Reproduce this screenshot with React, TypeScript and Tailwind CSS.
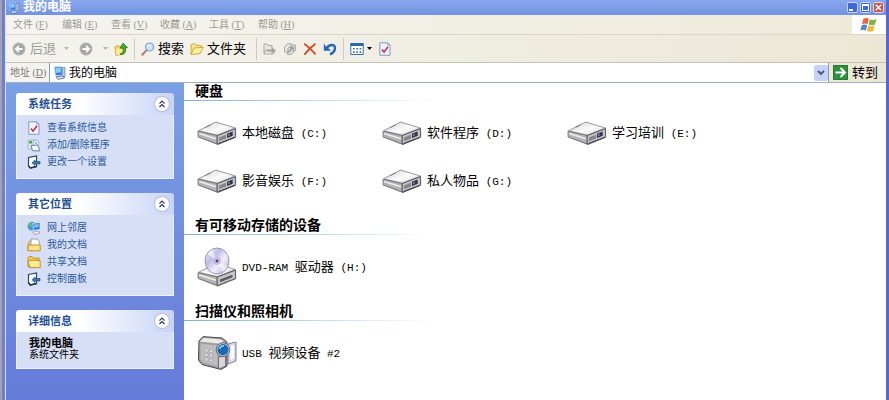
import React from 'react';

interface IconProps {
  className?: string;
}

const ComputerIcon: React.FC<IconProps> = ({ className = '' }) => (
  <svg viewBox="0 0 14 14" className={className} aria-hidden="true">
    <path d="M1.500.8h7.500v8.700h-6.500Z" fill="#2f7fe0" stroke="#b9d3f6" strokeWidth=".8" />
    <path d="M2.500 1.800h5.300v4.400l-4.800.8Z" fill="#8fcaf9" />
    <path d="M9.500 1.500H12v9H9.500Z" fill="#c9d3e6" stroke="#5f7197" strokeWidth=".7" />
    <path d="M3 10.800 10 10l1.500 2-6.500 1.400Z" fill="#dfe7f4" stroke="#4367a8" strokeWidth=".8" />
  </svg>
);

const ArrowDisc: React.FC<{ flip?: boolean }> = ({ flip = false }) => (
  <svg viewBox="0 0 14 14" className="size-3.5" aria-hidden="true">
    <circle cx="7" cy="7" r="6.4" fill="#a3a3a1" />
    <circle cx="7" cy="7" r="5.6" fill="none" stroke="#bcbcba" strokeWidth=".8" />
    <path
      d={flip ? 'M3.5 7h6M7 3.8 10.2 7 7 10.2' : 'M10.5 7h-6M7 3.8 3.8 7 7 10.2'}
      fill="none"
      stroke="#fff"
      strokeWidth="1.8"
    />
  </svg>
);

const Caret: React.FC<IconProps> = ({ className = '' }) => (
  <svg viewBox="0 0 5 3" className={`h-[3px] w-[5px] ${className}`} aria-hidden="true">
    <path d="M0 0h5L2.5 3Z" fill="currentColor" />
  </svg>
);

const UpFolderIcon = () => (
  <svg viewBox="0 0 14 14" className="size-3.5" aria-hidden="true">
    <path d="M1 5 4 3.5l1.5 1L11 4v7.5L2 13.5Z" fill="#f4d35c" stroke="#c79a25" strokeWidth=".8" />
    <path d="M1.8 7 8 5.8v6.3L2.2 13Z" fill="#fbe993" />
    <path d="M6.5 11.5c3-.6 3-3 2.8-5.2H6.2L9 1l4.600 4.600h-2c.5 4-1 6.600-5.100 7.200Z" fill="#3cae35" stroke="#1d7420" strokeWidth=".7" />
  </svg>
);

const SearchIcon = () => (
  <svg viewBox="0 0 14 14" className="size-3.5" aria-hidden="true">
    <path d="M5.4 8.4 1.3 12.8" stroke="#b67b54" strokeWidth="2" strokeLinecap="round" />
    <circle cx="8.6" cy="5" r="4" fill="#cfe6fa" stroke="#7b9cc9" strokeWidth="1.2" />
    <path d="M6.3 5a2.4 2.4 0 0 1 2.2-2.3" fill="none" stroke="#fff" strokeWidth="1.1" />
  </svg>
);

const FolderIcon = () => (
  <svg viewBox="0 0 14 14" className="size-3.5" aria-hidden="true">
    <path d="M1 12V2.4l3.6-.9 1.6 1.7 5 .5V7" fill="#fbe58a" stroke="#cda032" strokeWidth=".9" />
    <path d="M1 12.4 4 6l9.3-.7-3 6.2Z" fill="#fdf0a6" stroke="#cda032" strokeWidth=".9" />
  </svg>
);

const MoveToIcon = () => (
  <svg viewBox="0 0 14 14" className="size-3.5" aria-hidden="true">
    <path d="M1 12V2h3l1 1.5h4V6M1 12l2.5-5M1 12h9l2-2" fill="#e8e7e2" stroke="#aaa9a5" />
    <path d="M4 7.5h4.5V5L13 8.6 8.5 12V9.7H4Z" fill="#a3a29e" />
  </svg>
);

const CopyToIcon = () => (
  <svg viewBox="0 0 14 14" className="size-3.5" aria-hidden="true">
    <path d="M1.5 10V5L4 2l4-.5L9 4l-3 6.5Z" fill="#e8e7e2" stroke="#aaa9a5" />
    <path d="m5 6 4-3h3.5v5.5L8 12.5H4.5Z" fill="#dddcd7" stroke="#aaa9a5" />
    <path d="M5 10.5 9.5 6M6.8 5.5h3.4V9" fill="none" stroke="#999894" strokeWidth="1.3" />
  </svg>
);

const DeleteIcon = () => (
  <svg viewBox="0 0 14 14" className="size-3.5" aria-hidden="true">
    <path d="M1.2 1.8C5 4.5 9 8.4 12.6 12.4M12.4 1.8C8.6 4.6 4.6 8.6 1.4 12.6" stroke="#d24a1e" strokeWidth="1.8" fill="none" />
  </svg>
);

const UndoIcon = () => (
  <svg viewBox="0 0 14 14" className="size-3.5" aria-hidden="true">
    <path d="M3.5 6.2C6.500 1.800 12.300 2 12 6.400c-.2 2.600-2 4.600-5 6" fill="none" stroke="#2367b8" strokeWidth="2.4" />
    <path d="M.8 1.600v7.200H8L5.800 6.600 3.200 5Z" fill="#2367b8" />
  </svg>
);

const ViewsIcon = () => (
  <svg viewBox="0 0 14 14" className="size-3.5" aria-hidden="true">
    <path d="M.8 1.5h12.4v11H.8Z" fill="#fff" stroke="#3774a8" />
    <path d="M.5 1h13v3H.5Z" fill="#2c68a8" />
    <path d="M3 6h1.6v1.6H3zm3.3 0h1.6v1.6H6.3zm3.3 0h1.6v1.6H9.6zM3 9.3h1.6v1.6H3zm3.3 0h1.6v1.6H6.3zm3.3 0h1.6v1.6H9.6z" fill="#3c7281" />
  </svg>
);

const CheckPageIcon = () => (
  <svg viewBox="0 0 14 14" className="size-3.5" aria-hidden="true">
    <path d="M1.8.8h8L12 3v10.3H1.8Z" fill="#eef2fd" stroke="#7c8fc0" strokeWidth=".9" />
    <path d="M9.6.8V3H12" fill="#c6d2ee" stroke="#7c8fc0" strokeWidth=".7" />
    <path d="m4 7.6 2 2.6 4-5.4" fill="none" stroke="#c93750" strokeWidth="1.7" />
  </svg>
);

const ProgramsIcon = () => (
  <svg viewBox="0 0 14 14" className="size-3.5" aria-hidden="true">
    <path d="M1 2h8v9H1Z" fill="#dceadf" stroke="#9ab3c4" strokeWidth=".8" />
    <path d="M2 3h3v2.5H2z" fill="#4ea55c" />
    <circle cx="8.8" cy="5" r="3" fill="#e9f0fb" stroke="#8ba1c4" strokeWidth=".8" />
    <circle cx="8.8" cy="5" r=".9" fill="#7c96bd" />
    <path d="M4 7.5 10.8 7l2 5.8H5.5Z" fill="#f4f8ff" stroke="#59789f" strokeWidth=".9" />
  </svg>
);

const SettingsIcon = () => (
  <svg viewBox="0 0 14 14" className="size-3.5" aria-hidden="true">
    <path d="M1.5 2.5 9.5 1v10.5l-6 1.5-2-2Z" fill="#fff" stroke="#27486b" strokeWidth="1.2" />
    <path d="M1.5 11 3.4 13l6-1.5" fill="none" stroke="#173350" strokeWidth="1.4" />
    <path d="M5 7.8 8 5v1.5h5v2.4H8v1.6Z" fill="#3c7ab8" stroke="#254e7a" strokeWidth=".7" />
  </svg>
);

const NetworkIcon = () => (
  <svg viewBox="0 0 14 14" className="size-3.5" aria-hidden="true">
    <circle cx="5" cy="5.2" r="4.4" fill="#3f9ad8" />
    <path d="M1.2 4.2C2.4 1.6 5 1 6.4 1.6 5 2.6 5.6 4.4 3.7 5c-.4 1.4-.9 1.4-2.5-.8Z" fill="#6dc067" />
    <path d="M5.8 2.4 13 1.5v7l-6.5 1Z" fill="#2f78d4" stroke="#dbe6f8" strokeWidth=".8" />
    <path d="m7 3.6 4.7-.7v3L7.3 7Z" fill="#83bbf2" />
    <path d="M5.6 11 12 10l1 2-5.8 1.6Z" fill="#e9edf6" stroke="#a68fa2" strokeWidth=".7" />
  </svg>
);

const DocumentsIcon = () => (
  <svg viewBox="0 0 14 14" className="size-3.5" aria-hidden="true">
    <path d="M1 5 4 2h1.5v10.5H1Z" fill="#f4cf59" stroke="#b98a22" strokeWidth=".8" />
    <path d="M4 1h6l2.2 2.2V11H4Z" fill="#fff" stroke="#7b8fb4" strokeWidth=".8" />
    <path d="M1 12.8V8.2L3 7h10.2v5.8Z" fill="#fbe48a" stroke="#b98a22" strokeWidth=".9" />
  </svg>
);

const SharedIcon = () => (
  <svg viewBox="0 0 14 14" className="size-3.5" aria-hidden="true">
    <path d="M1 12V2.6l1-1h3.2l1.3 1.6h5.7V12Z" fill="#f3ca4c" stroke="#b98a22" strokeWidth=".9" />
    <path d="m1 6.4 4-1.2 8.2.4v7H3Z" fill="#fdeb94" stroke="#b98a22" strokeWidth=".9" />
  </svg>
);

const DriveBase = () => (
  <>
    <path d="M1 10.5 19 1.2 39 8v8.5L21 24 1 16.2Z" fill="#8b8b8e" />
    <path d="M1.5 9.8 18.6 1 38.5 7 20.4 14.2Z" fill="url(#driveTop)" stroke="#858588" strokeWidth=".8" />
    <path d="M1 10.2 20.2 14.6V23L1 15.8Z" fill="#b4b4b6" stroke="#727275" strokeWidth=".8" />
    <path d="m2.2 12.6 16.8 5.2" stroke="#ededee" strokeWidth="1.6" />
    <path d="M20.2 14.6 38.6 7.6V16L20.2 23.2Z" fill="#c4c4c7" stroke="#505055" strokeWidth=".9" />
  </>
);

const DriveIcon = () => (
  <svg viewBox="0 0 40 25" className="w-10 shrink-0" aria-hidden="true">
    <defs>
      <linearGradient id="driveTop" x1="0" y1="0" x2="1" y2="1">
        <stop offset="0" stopColor="#d3d3d5" />
        <stop offset=".55" stopColor="#fbfbfb" />
        <stop offset="1" stopColor="#cfcfd1" />
      </linearGradient>
    </defs>
    <DriveBase />
    <path d="m22 16.4 7-2.6v3.7l-7 2.7Z" fill="#86868a" />
    <path d="m30 12.8 5.7-2.2v4.2L30 17Z" fill="#2f3348" />
    <path d="m30.8 13.2 2-.8v2.3l-2 .8Z" fill="#6a77a8" />
    <path d="m8.5 6.5 5-2.6" stroke="#77777a" />
    <path d="m22 22.4 16-6" stroke="#3f3f44" />
  </svg>
);

const DvdIcon = () => (
  <svg viewBox="0 0 40 40" className="w-10 shrink-0" aria-hidden="true">
    <defs>
      <linearGradient id="disc" x1="0" y1="0" x2="1" y2="1">
        <stop offset="0" stopColor="#f4f4fb" />
        <stop offset=".35" stopColor="#bcbde6" />
        <stop offset=".6" stopColor="#f2f0fc" />
        <stop offset="1" stopColor="#a9a8dc" />
      </linearGradient>
    </defs>
    <g transform="translate(0 15.5)">
      <DriveBase />
      <path d="m23 17 12.5-4.8v2.6L23 19.8Z" fill="#5a5a60" />
    </g>
    <ellipse cx="20" cy="14" rx="12" ry="13" fill="url(#disc)" stroke="#86869d" strokeWidth=".8" />
    <path d="M20 14 10.5 7a12 13 0 0 1 5-4.8ZM20 14l10.5 5.6a12 13 0 0 1-4.6 5.4Z" fill="#fff" opacity=".55" />
    <circle cx="20" cy="14" r="3.4" fill="#dcdcf2" stroke="#9493ba" strokeWidth=".7" />
    <circle cx="20" cy="14" r="1.7" fill="#5d517c" />
  </svg>
);

const CameraIcon = () => (
  <svg viewBox="0 0 40 36" className="w-10 shrink-0" aria-hidden="true">
    <path d="m31 9 8-2v19l-8 3Z" fill="#d5d9f0" stroke="#84848e" strokeWidth="1" />
    <path d="m33.5 11 3.5-1v13.5L33.5 25Z" fill="#fff" />
    <path d="M2 6 6 1.6 25 3l5 4v24l-6 3.4L5 29.6 1.4 25Z" fill="#a5a5a7" stroke="#4b4b50" strokeWidth="1" />
    <path d="M3 6.6 7 3l17 1.4 3 2.6-5 1.6Z" fill="#ececed" />
    <path d="m3 8 18 2v22L6 28 3 24.5Z" fill="#bdbdbf" stroke="#8b8b90" strokeWidth=".6" />
    <path d="M8 14h3v3H8zm4.5.5h3v3h-3zM8 18.5h3v3H8zm4.5.5h3v3h-3zM8 23h3v3H8zm4.5.8h3v3h-3z" fill="#e0e0e2" stroke="#99999e" strokeWidth=".5" />
    <path d="m21.5 22 7-1v10l-5 2.4-2-.4Z" fill="#d6d6d8" stroke="#58585c" strokeWidth=".7" />
    <circle cx="26" cy="14.6" r="6.8" fill="#cfd5dd" stroke="#47505f" strokeWidth=".8" />
    <circle cx="26" cy="14.6" r="5.6" fill="#1c66b8" />
    <path d="M22.600 14a3.600 3.600 0 0 1 4.400-3" fill="none" stroke="#8dc4f5" strokeWidth="1.8" />
  </svg>
);

const WindowsFlag = () => (
  <svg viewBox="0 0 18 16" className="h-4 w-[18px]" aria-hidden="true">
    <path d="M3.4 1.8C5.4.6 7 .8 8.800 1.800L7.500 7.200C5.800 6.200 4 6.200 2 7.200Z" fill="#e8663a" />
    <path d="M9.8 2.2c2 1 4 1 6.600-.2L15 7.500c-2 1-4.500 1-6.500.1Z" fill="#7fb24a" />
    <path d="M1.700 8.200c2-1 3.800-1 5.500 0L5.900 13.600c-1.800-1-3.500-1-5.500 0Z" fill="#4f86d2" />
    <path d="M8.200 8.600c2 1 4.200 1 6.500 0l-1.400 5.500c-2 1-4.400 1-6.400 0Z" fill="#f0bb3c" />
  </svg>
);

const menus = [
  { name: '文件', key: 'F' },
  { name: '编辑', key: 'E' },
  { name: '查看', key: 'V' },
  { name: '收藏', key: 'A' },
  { name: '工具', key: 'T' },
  { name: '帮助', key: 'H' },
];

const tasks = [
  { label: '查看系统信息', icon: <CheckPageIcon /> },
  { label: '添加/删除程序', icon: <ProgramsIcon /> },
  { label: '更改一个设置', icon: <SettingsIcon /> },
];

const places = [
  { label: '网上邻居', icon: <NetworkIcon /> },
  { label: '我的文档', icon: <DocumentsIcon /> },
  { label: '共享文档', icon: <SharedIcon /> },
  { label: '控制面板', icon: <SettingsIcon /> },
];

const disks = [
  { name: '本地磁盘', drive: '(C:)' },
  { name: '软件程序', drive: '(D:)' },
  { name: '学习培训', drive: '(E:)' },
  { name: '影音娱乐', drive: '(F:)' },
  { name: '私人物品', drive: '(G:)' },
];

const Latin: React.FC<{ children: React.ReactNode }> = ({ children }) => (
  <span className="font-['Liberation_Mono',monospace] text-[11px]">{children}</span>
);

const Separator = () => <div className="h-[22px] w-px bg-[#cfccbd]" />;

const Panel: React.FC<{ title: string; children: React.ReactNode }> = ({ title, children }) => (
  <section>
    <div className="flex h-[22px] items-center justify-between rounded-t-[3px] bg-gradient-to-r from-white from-40% to-[#c8d4f7] pl-3 pr-[5px]">
      <h2 className="text-[11px] font-bold text-[#1f4f94]">{title}</h2>
      <button type="button" aria-label={`折叠${title}`} className="flex size-3.5 items-center justify-center rounded-full bg-white shadow-[0_0_1px_1px_#b4bfdd]">
        <svg viewBox="0 0 8 8" className="size-2" aria-hidden="true">
          <path d="M1.5 3.7 4 1.2l2.5 2.5M1.5 7 4 4.5 6.5 7" fill="none" stroke="#26365c" strokeWidth="1.2" />
        </svg>
      </button>
    </div>
    <div className="border border-t-0 border-[#eef2fd] bg-[#d7dff7]">{children}</div>
  </section>
);

const LinkList: React.FC<{ items: { label: string; icon: React.ReactNode }[] }> = ({ items }) => (
  <ul className="px-2.5 pb-2 pt-1">
    {items.map((item) => (
      <li key={item.label}>
        <a href="#" className="flex h-[17px] items-center gap-1.5 text-[10px] text-[#2a5a9c] hover:underline">
          {item.icon}
          {item.label}
        </a>
      </li>
    ))}
  </ul>
);

const Group: React.FC<{ title: string; children: React.ReactNode }> = ({ title, children }) => (
  <section>
    <h2 className="h-[17px] pl-[11px] text-[14px] font-bold leading-[17px]">{title}</h2>
    <div className="h-px w-[250px] bg-gradient-to-r from-[#7fb0cc] to-white" />
    <ul className="grid grid-cols-[repeat(auto-fill,185px)] pl-[13px] pt-2">{children}</ul>
  </section>
);

const Item: React.FC<{ icon: React.ReactNode; children: React.ReactNode }> = ({ icon, children }) => (
  <li className="flex h-12 items-center gap-[5px] whitespace-pre text-[13px]">
    {icon}
    <span>{children}</span>
  </li>
);

export default function App() {
  return (
    <div className="flex min-h-screen bg-white font-['Liberation_Sans','Noto_Sans_CJK_SC',sans-serif] text-black">
      {/* Window edge */}
      <div className="w-[5px] shrink-0 border-l-2 border-[#a99fb4] bg-[#6a80d4]" />
      <div className="flex min-w-0 grow flex-col border-l border-r-[3px] border-l-[#dfe6fa] border-r-[#5469cf]">
        {/* Title bar */}
        <header className="flex h-[15px] items-center justify-between bg-gradient-to-b from-[#86a8ee] to-[#7392e0] px-[2px]">
          <div className="flex items-center gap-[3px]">
            <ComputerIcon className="size-3" />
            <h1 className="text-[12px] font-bold leading-[15px] text-white">我的电脑</h1>
          </div>
          <div className="flex gap-[2px]">
            <button type="button" aria-label="最小化" className="flex size-[11px] items-end rounded-[2px] border border-[#c9d6f8] bg-[#3f67d6] p-px">
              <span className="h-[2px] w-1 bg-white" />
            </button>
            <button type="button" aria-label="最大化" className="flex size-[11px] items-center justify-center rounded-[2px] border border-[#c9d6f8] bg-[#3f67d6]">
              <span className="size-[7px] border border-t-2 border-white" />
            </button>
            <button type="button" aria-label="关闭" className="flex size-[11px] items-center justify-center rounded-[2px] border border-[#eccfd0] bg-[#cc5547]">
              <svg viewBox="0 0 7 7" className="size-[7px]" aria-hidden="true">
                <path d="m.8.8 5.400 5.400m0-5.400L.8 6.200" stroke="#fff" strokeWidth="1.500" />
              </svg>
            </button>
          </div>
        </header>

        {/* Menu bar */}
        <div className="flex h-5 items-stretch justify-between border-b border-[#dad7c9] bg-gradient-to-r from-[#f5f4f1] to-[#eee9d8]">
          <nav className="flex items-center gap-3.5 pl-[7px] text-[10px] text-[#9b9a94]">
            {menus.map((menu) => (
              <button type="button" key={menu.key} className="w-[35px] whitespace-nowrap text-left">
                {menu.name}
                <span className="font-['Liberation_Serif',serif]">
                  {' '}(<u>{menu.key}</u>)
                </span>
              </button>
            ))}
          </nav>
          <div className="flex w-[34px] items-center justify-center bg-white">
            <WindowsFlag />
          </div>
        </div>

        {/* Toolbar */}
        <div className="flex h-7 items-center gap-1.5 border-b border-[#c4c2b6] bg-gradient-to-r from-[#f4f3ef] to-[#ece7d5] pl-1.5 text-[13px]">
          <button type="button" className="flex items-center gap-1 text-[#9d9c97]">
            <ArrowDisc />
            后退
            <Caret className="ml-1 text-[#b5b4ae]" />
          </button>
          <button type="button" aria-label="前进" className="ml-1 flex items-center gap-2.5 text-[#b5b4ae]">
            <ArrowDisc flip />
            <Caret />
          </button>
          <button type="button" aria-label="向上">
            <UpFolderIcon />
          </button>
          <Separator />
          <button type="button" className="flex items-center gap-[3px]">
            <SearchIcon />
            搜索
          </button>
          <button type="button" className="flex items-center gap-[3px]">
            <FolderIcon />
            文件夹
          </button>
          <div className="ml-1">
            <Separator />
          </div>
          <button type="button" aria-label="移至">
            <MoveToIcon />
          </button>
          <button type="button" aria-label="复制到">
            <CopyToIcon />
          </button>
          <button type="button" aria-label="删除">
            <DeleteIcon />
          </button>
          <button type="button" aria-label="撤销">
            <UndoIcon />
          </button>
          <Separator />
          <button type="button" aria-label="查看方式" className="flex items-center gap-[3px]">
            <ViewsIcon />
            <Caret />
          </button>
          <button type="button" aria-label="属性">
            <CheckPageIcon />
          </button>
        </div>

        {/* Address bar */}
        <div className="flex h-5 items-center border-b border-[#9fb0c4] bg-gradient-to-r from-[#f4f3ef] to-[#ece7d5] pl-1">
          <label htmlFor="address" className="w-[39px] whitespace-nowrap text-[10px] text-[#7c7b76]">
            地址
            <span className="font-['Liberation_Serif',serif]">
              {' '}(<u>D</u>)
            </span>
          </label>
          <div className="flex h-full grow items-center gap-[2px] border-l border-r border-[#7f9db9] bg-white pl-[3px]">
            <ComputerIcon className="size-3.5" />
            <input id="address" type="text" defaultValue="我的电脑" className="min-w-0 grow text-[12px] leading-4 outline-none" />
            <button type="button" aria-label="展开地址列表" className="flex h-4 w-3.5 items-center justify-center rounded-[2px] bg-[#c5d3f8]">
              <svg viewBox="0 0 8 6" className="h-1.5 w-2" aria-hidden="true">
                <path d="m1 1 3 3 3-3" fill="none" stroke="#3d5687" strokeWidth="1.8" />
              </svg>
            </button>
          </div>
          <button type="button" className="flex items-center gap-1 pl-1 pr-2 text-[13px]">
            <svg viewBox="0 0 15 15" className="size-[15px]" aria-hidden="true">
              <path d="M0 0h15v15H0Z" fill="#2f9140" />
              <path d="M.5.5h14v14H.5Z" fill="none" stroke="#1f7a33" />
              <path d="M2.5 7.5h9M7.5 3l4.500 4.500L7.500 12" fill="none" stroke="#fff" strokeWidth="1.9" />
            </svg>
            转到
          </button>
        </div>

        <div className="flex grow">
          {/* Task pane */}
          <aside className="flex w-[178px] shrink-0 flex-col gap-3.5 bg-gradient-to-b from-[#7ba0e4] to-[#667bd9] px-2.5 pb-4 pt-2.5">
            <Panel title="系统任务">
              <LinkList items={tasks} />
            </Panel>
            <Panel title="其它位置">
              <LinkList items={places} />
            </Panel>
            <Panel title="详细信息">
              <div className="px-3 pb-2 pt-1.5">
                <p className="text-[11px] font-bold leading-[11px]">我的电脑</p>
                <p className="text-[10px] leading-[11px]">系统文件夹</p>
              </div>
            </Panel>
          </aside>

          <main className="flex min-w-0 grow flex-col gap-3">
            <Group title="硬盘">
              {disks.map((disk) => (
                <Item key={disk.drive} icon={<DriveIcon />}>
                  {disk.name}
                  <Latin> {disk.drive}</Latin>
                </Item>
              ))}
            </Group>
            <Group title="有可移动存储的设备">
              <Item icon={<DvdIcon />}>
                <Latin>DVD-RAM </Latin>
                驱动器
                <Latin> (H:)</Latin>
              </Item>
            </Group>
            <Group title="扫描仪和照相机">
              <Item icon={<CameraIcon />}>
                <Latin>USB </Latin>
                视频设备
                <Latin> #2</Latin>
              </Item>
            </Group>
          </main>
        </div>
      </div>
    </div>
  );
}
